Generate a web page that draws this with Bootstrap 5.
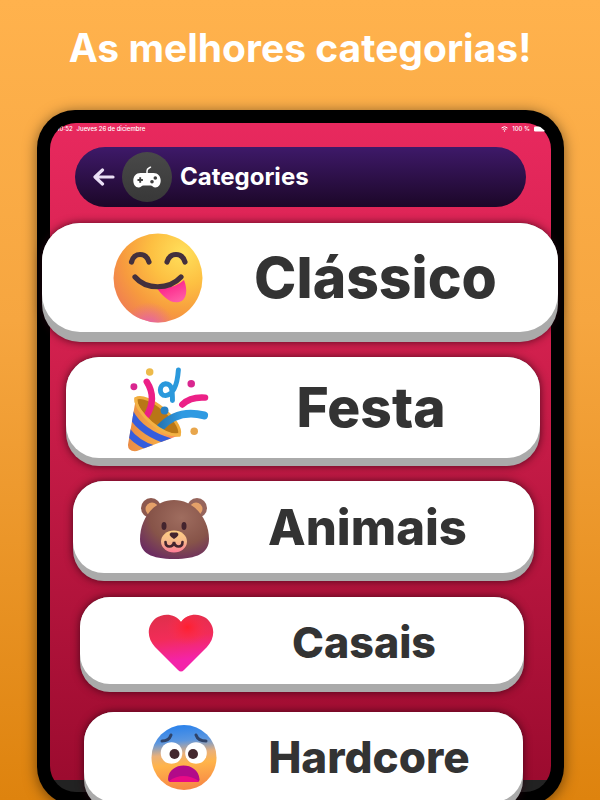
<!DOCTYPE html>
<html lang="pt">
<head>
<meta charset="utf-8">
<meta name="viewport" content="width=device-width, initial-scale=1">
<title>As melhores categorias!</title>
<link href="https://cdn.jsdelivr.net/npm/bootstrap@5.3.0/dist/css/bootstrap.min.css" rel="stylesheet">
<style>
body{font-family:Inter,"Open Sans",sans-serif;background:linear-gradient(#ffb24d,#f6a640 40%,#de830e);height:100vh;overflow:hidden}
.headline{font-size:39px;line-height:48px;padding-top:24px;margin-bottom:38px}
.tablet{margin:0 36px 0 37px;padding:13px;background:#000;border-radius:38px;box-shadow:0 2px 14px rgba(0,0,0,.5)}
.screen{background:linear-gradient(transparent calc(100% - 12px),#222 calc(100% - 12px)),linear-gradient(#e8295e,#d4214f 30%,#9c0b2f 98%);border-radius:26px;padding-bottom:12px}
.status{font-size:6px;line-height:12px;height:24px;border-radius:26px 26px 0 0;padding:0 5px 0 7px;font-weight:500}
.topbar{margin:0 25px 16px 25px;height:60px;padding-left:18px;border-radius:30px;background:linear-gradient(#3e1969,#1c0728)}
.back{width:22px;height:22px}
.pad{width:50px;height:50px;margin:0 8px 0 7px;background:linear-gradient(#494949,#383838)}
.topbar h2{font-size:24px;line-height:30px}
.choice{height:var(--h);margin:0 var(--mr) var(--gap) var(--ml);border-radius:var(--r);font-size:var(--fs);font-weight:800;line-height:1;color:#333;background:#aaa;box-shadow:0 0 9px rgba(40,0,15,.75);padding:0 0 var(--lip)}
.choice svg{width:var(--ic);height:var(--ic)}
.face{background:#fff;border-radius:var(--r);padding:0 10px 0 var(--pl)}
.c1{--lip:10px;--h:119px;--pl:71px;--ml:-8px;--mr:-7px;--gap:15px;--r:38px;--fs:57px;--ic:90px}
.c2{--lip:8px;--h:109px;--pl:58px;--ml:16px;--mr:11px;--gap:15px;--r:33px;--fs:55px;--ic:88px}
.c3{--lip:8px;--h:100px;--pl:66px;--ml:23px;--mr:17px;--gap:16px;--r:31px;--fs:49px;--ic:72px}
.c4{--lip:8px;--h:95px;--pl:68px;--ml:30px;--mr:27px;--gap:20px;--r:30px;--fs:43px;--ic:66px}
.c5{--lip:8px;--h:98px;--pl:67px;--ml:34px;--mr:28px;--gap:-30px;--r:30px;--fs:44px;--ic:66px}
.c5 .face{padding-right:2px}
</style>
<script src="https://cdn.jsdelivr.net/npm/bootstrap@5.3.0/dist/js/bootstrap.bundle.min.js"></script>
</head>
<body>
<h1 class="headline text-white text-center fw-bold text-nowrap">As melhores categorias!</h1>
<main class="tablet">
<div class="screen d-flex flex-column">
<div class="status d-flex justify-content-between text-white overflow-hidden">
<div class="d-flex gap-1"><span>10:52</span><span>Jueves 26 de diciembre</span></div>
<div class="d-flex"><svg class="me-1" width="7" height="12" viewBox="0 0 7 12" fill="none" stroke="#fff"><path d="M.5 5Q3.5 2.3 6.5 5M1.7 6.5Q3.5 5 5.3 6.500"/><circle cx="3.5" cy="8" r=".7" fill="#fff" stroke="none"/></svg><span>100 %</span><svg class="ms-1" width="12" height="12" viewBox="0 0 12 12"><rect y="3.500" width="11" height="5" rx="1.300" fill="#fff"/></svg></div>
</div>
<header class="topbar d-flex align-items-center">
<button class="btn p-0 border-0 d-flex" aria-label="Back"><svg class="back" viewBox="0 0 22 22" fill="none" stroke="#eadff5" stroke-width="3.200" stroke-linecap="round" stroke-linejoin="round"><path d="M20 11H3M9.500 4L2 11l7.500 7"/></svg></button>
<span class="pad rounded-circle d-flex align-items-center justify-content-center"><svg width="28" height="24" viewBox="0 0 28 24"><path d="M14 9V6Q14 4 16 3L17.500 2.200" fill="none" stroke="#fff" stroke-width="1.500" stroke-linecap="round"/><path d="M7.500 8H20.500C25 8 27.700 11.500 27.700 15.500C27.700 19.500 25.500 22.500 22.500 22.500C20 22.500 19.500 20.500 17.500 20.500H10.500C8.500 20.500 8 22.500 5.500 22.500C2.500 22.500.3 19.500.3 15.500C.3 11.500 3 8 7.500 8Z" fill="#fff"/><path d="M4.500 15h5.400M7.200 12.300v5.400" stroke="#3d3d3d" stroke-width="1.900"/><circle cx="22.300" cy="13" r="1.800" fill="#3d3d3d"/><circle cx="19" cy="16.700" r="1.800" fill="#3d3d3d"/></svg></span>
<h2 class="text-white fw-bold m-0">Categories</h2>
</header>
<button class="choice c1 border-0 d-flex"><span class="face d-flex w-100 h-100 align-items-center">
<svg class="flex-shrink-0" viewBox="0 0 90 90"><defs><radialGradient id="faceFill" cx=".78" cy=".22" r=".9"><stop stop-color="#ffe05b"/><stop offset=".4" stop-color="#fdc042"/><stop offset=".75" stop-color="#f79b3e"/><stop offset="1" stop-color="#f08050"/></radialGradient><radialGradient id="faceGlow" cx=".4" cy="1.050" r=".28"><stop stop-color="#e45fb5"/><stop offset="1" stop-color="#e762a5" stop-opacity="0"/></radialGradient><linearGradient id="tongue" x1="0" y1="0" x2=".6" y2="1"><stop stop-color="#fb0b7c"/><stop offset="1" stop-color="#ff5aa5"/></linearGradient></defs><circle cx="45" cy="45" r="44.500" fill="url(#faceFill)"/><circle cx="45" cy="45" r="44.500" fill="url(#faceGlow)"/><path d="M43 54Q60 57 71 47C75 57 74 67 66 69C56 71 49 62 43 54Z" fill="url(#tongue)"/><g fill="none" stroke="#43303d" stroke-width="5.200" stroke-linecap="round"><path d="M18.500 29C21 19 33 19 36 29M54 29C57 19 69 19 72 29"/><path d="M22 44C33 57 56 57 68 44"/></g></svg>
<span class="flex-fill text-center">Clássico</span></span></button>
<button class="choice c2 border-0 d-flex"><span class="face d-flex w-100 h-100 align-items-center">
<svg class="flex-shrink-0" viewBox="-3 2 89 89"><defs><clipPath id="coneClip"><path d="M9 37C11 54 38 76 53 74L10 90Q1 91 1 84Z"/></clipPath><linearGradient id="cone"><stop stop-color="#e98b45"/><stop offset=".6" stop-color="#f6aa45"/><stop offset="1" stop-color="#ff7567"/></linearGradient><linearGradient id="ribbon" x2="1"><stop stop-color="#2675b2"/><stop offset=".5" stop-color="#2f9ae2"/></linearGradient></defs><path d="M9 37C20 30 57 60 53 73C38 79 8 52 9 37Z" fill="#b97616" stroke="#f0ac3d" stroke-width="3"/><g fill="none" stroke-linecap="round"><path d="M19 56Q31 37 20 20" stroke="#ec1e86" stroke-width="6.500"/><path d="M33 67Q51 47 78 54" stroke="url(#ribbon)" stroke-width="8"/><path d="M56 43Q64 35 79 36" stroke="#ec2187" stroke-width="6.500"/><path d="M52 8C51 22 47 33 39 34C32 34 32 23 39 22C46 22 46 30 46 39" stroke="#2b99dc" stroke-width="5"/></g><path d="M9 37C11 54 38 76 53 74L10 90Q1 91 1 84Z" fill="url(#cone)"/><g clip-path="url(#coneClip)" fill="none" stroke="#355ddc" stroke-width="7"><path d="M3 51Q14 72 45 81M-1 68Q10 83 28 88"/></g><path d="M9 37C8 51 37 76 53 74" fill="none" stroke="#f3b144" stroke-width="3" stroke-linecap="round"/><circle cx="38" cy="49" r="4" fill="#287fc2"/><circle cx="7" cy="25" r="3.500" fill="#d9268f"/><circle cx="23" cy="10" r="3.800" fill="#edba4a"/><circle cx="65" cy="22" r="3.800" fill="#d9268f"/><circle cx="68" cy="70" r="3.800" fill="#e8a64c"/></svg>
<span class="flex-fill text-center">Festa</span></span></button>
<button class="choice c3 border-0 d-flex"><span class="face d-flex w-100 h-100 align-items-center">
<svg class="flex-shrink-0" viewBox="0 -3 72 64"><defs><radialGradient id="fur" cx=".6" cy=".3" r=".75"><stop stop-color="#9f6d5f"/><stop offset=".6" stop-color="#875449"/><stop offset="1" stop-color="#6c2d60"/></radialGradient><linearGradient id="snout" x2="0" y2="1"><stop stop-color="#ffcf83"/><stop offset=".5" stop-color="#f7b88b"/><stop offset="1" stop-color="#ff7a97"/></linearGradient></defs><circle cx="12" cy="10" r="10" fill="#8d594f"/><circle cx="58" cy="10" r="10" fill="#96655c"/><circle cx="13" cy="11" r="6.500" fill="#e5a169"/><circle cx="57" cy="11" r="6.500" fill="#e5a169"/><path d="M35 2C56 2 70 22 70 41C70 55 58 61 35 61S1 55 1 41C1 22 14 2 35 2Z" fill="url(#fur)"/><ellipse cx="35" cy="43.500" rx="13" ry="11" fill="url(#snout)"/><g fill="#43242e"><ellipse cx="25" cy="28" rx="2.500" ry="4"/><ellipse cx="45" cy="28" rx="2.500" ry="4"/><path d="M32 34.500H38Q42 36.500 35 41Q28 36.500 32 34.500Z"/></g><path d="M26.500 44C26.500 50 34 50 35 44C36 50 43.500 50 43.500 44" fill="none" stroke="#43242e" stroke-width="2.600" stroke-linecap="round"/></svg>
<span class="flex-fill text-center">Animais</span></span></button>
<button class="choice c4 border-0 d-flex"><span class="face d-flex w-100 h-100 align-items-center pt-1">
<svg class="flex-shrink-0" viewBox="0 0 66 58"><defs><linearGradient id="heart" x1=".4" x2=".55" y2="1"><stop stop-color="#e02f4c"/><stop offset=".4" stop-color="#f22c58"/><stop offset=".8" stop-color="#f423a9"/></linearGradient><radialGradient id="heartGlow" cx=".6" cy=".22" r=".32"><stop stop-color="#ff1f2e"/><stop offset="1" stop-color="#ff304c" stop-opacity="0"/></radialGradient></defs><path d="M33 8C39-1 51-1 58 4C68 12 67 24 59 33L36 56Q33 59 30 56L7 33C-1 24-2 12 8 4C15-1 27-1 33 8Z" fill="url(#heart)"/><path d="M33 8C39-1 51-1 58 4C68 12 67 24 59 33L36 56Q33 59 30 56L7 33C-1 24-2 12 8 4C15-1 27-1 33 8Z" fill="url(#heartGlow)"/></svg>
<span class="flex-fill text-center">Casais</span></span></button>
<button class="choice c5 border-0 d-flex"><span class="face d-flex w-100 h-100 align-items-center">
<svg class="flex-shrink-0" viewBox="0 -2 66 66"><defs><linearGradient id="fear" x1=".45" x2=".55" y2="1"><stop stop-color="#2b82eb"/><stop offset=".24" stop-color="#5a96e0"/><stop offset=".44" stop-color="#eab079"/><stop offset=".6" stop-color="#ffb44a"/><stop offset="1" stop-color="#f68545"/></linearGradient></defs><circle cx="33" cy="31.500" r="32.500" fill="url(#fear)"/><circle cx="20.500" cy="27" r="10.800" fill="#fff"/><circle cx="45" cy="27" r="10.800" fill="#fff"/><circle cx="23.500" cy="28" r="5" fill="#43282e"/><circle cx="42" cy="28" r="5" fill="#43282e"/><path d="M17 53C18 35 47 35 48.500 53Q49 56 46 56H20Q17 56 17 53Z" fill="#b20a89"/><path d="M18 55Q32 45 48 55L46 56H20Z" fill="#e90a86"/><path d="M11 15Q18 15 20 9M45 9Q47 15 55 15" fill="none" stroke="#2f4369" stroke-width="3" stroke-linecap="round"/></svg>
<span class="flex-fill text-center">Hardcore</span></span></button>
</div>
</main>
</body>
</html>
